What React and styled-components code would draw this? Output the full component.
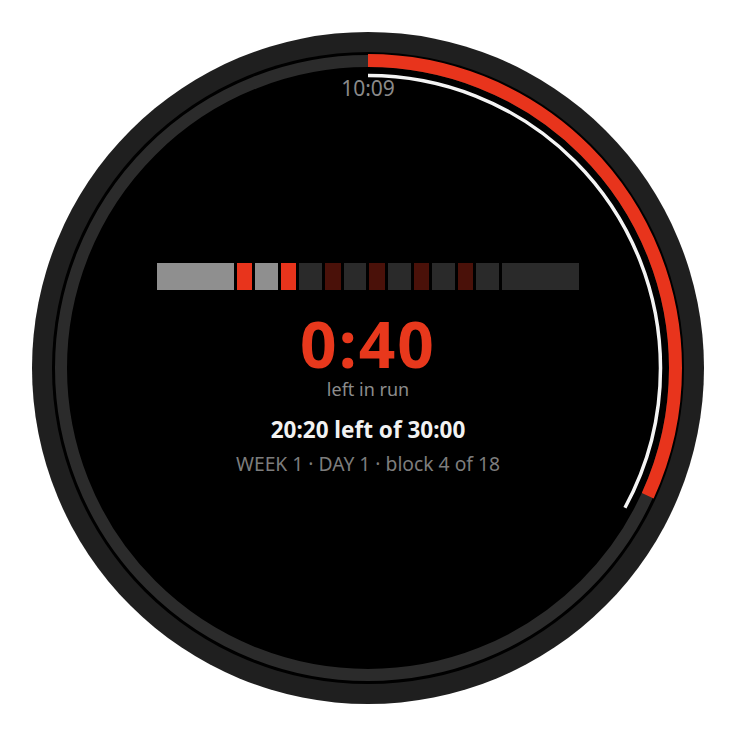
import React from "react";
import styled, { createGlobalStyle } from "styled-components";

const Global = createGlobalStyle`
  html, body { margin: 0; padding: 0; background: #ffffff; }
  body { font-family: "Noto Sans", "Open Sans", sans-serif; }
`;

const Page = styled.div`
  width: 736px;
  height: 736px;
  display: flex;
  align-items: center;
  justify-content: center;
`;

const Bezel = styled.div`
  width: 672px;
  height: 672px;
  box-sizing: border-box;
  border-radius: 50%;
  background: #1f1f1f;
  padding: 20px;
`;

const Face = styled.div`
  position: relative;
  width: 100%;
  height: 100%;
  border-radius: 50%;
  background: #000;
  overflow: hidden;
`;

const Rings = styled.svg`
  position: absolute;
  inset: 0;
  width: 100%;
  height: 100%;
`;

const Screen = styled.div`
  position: relative;
  height: 100%;
  display: grid;
  grid-template-rows: 1fr auto 1fr;
  justify-items: center;
`;

const Clock = styled.div`
  align-self: start;
  padding-top: 26px;
  font-size: 21px;
  line-height: 1;
  color: #8a8a8a;
`;

const Center = styled.div`
  display: flex;
  flex-direction: column;
  align-items: center;
`;

const Bar = styled.div`
  width: 422px;
  height: 27px;
  display: flex;
  gap: 3px;
  margin-bottom: 22px;
`;

const segColors = {
  doneWalk: "#8f8f8f",
  run: "#e8341c",
  walk: "#2a2a2a",
  futureRun: "#4a1109",
};

const Seg = styled.div`
  flex: ${(p) => p.$w} 1 0;
  background: ${(p) => segColors[p.$kind]};
`;

const Big = styled.div`
  font-size: 64px;
  font-weight: 700;
  line-height: 1;
  color: #e8381c;
  letter-spacing: 2px;
`;

const Caption = styled.div`
  margin-top: 4px;
  font-size: 18px;
  line-height: 1;
  color: #8c8c8c;
`;

const Total = styled.div`
  margin-top: 21px;
  font-size: 22.5px;
  font-weight: 700;
  line-height: 1;
  color: #f2f2f2;
`;

const Plan = styled.div`
  margin-top: 12px;
  font-size: 19.3px;
  line-height: 1;
  color: #7d7d7d;
`;

const segments = [
  [5, "doneWalk"],
  [1, "run"],
  [1.5, "doneWalk"],
  [1, "run"],
  [1.5, "walk"],
  [1, "futureRun"],
  [1.5, "walk"],
  [1, "futureRun"],
  [1.5, "walk"],
  [1, "futureRun"],
  [1.5, "walk"],
  [1, "futureRun"],
  [1.5, "walk"],
  [5, "walk"],
];

function Arc({ r, width, color, degrees }) {
  const c = 2 * Math.PI * r;
  const len = (degrees / 360) * c;
  return (
    <circle
      cx="316"
      cy="316"
      r={r}
      fill="none"
      stroke={color}
      strokeWidth={width}
      strokeDasharray={`${len} ${c}`}
      transform="rotate(-90 316 316)"
    />
  );
}

export default function App() {
  return (
    <Page>
      <Global />
      <Bezel>
        <Face>
          <Rings viewBox="0 0 632 632">
            <circle cx="316" cy="316" r="307" fill="none" stroke="#2b2b2b" strokeWidth="12" />
            <Arc r={307.5} width={13} color="#e8341c" degrees={114.5} />
            <Arc r={292.5} width={3.5} color="#f4f4f4" degrees={118.5} />
          </Rings>
          <Screen>
            <Clock>10:09</Clock>
            <Center>
              <Bar>
                {segments.map(([w, kind], i) => (
                  <Seg key={i} $w={w} $kind={kind} />
                ))}
              </Bar>
              <Big>0:40</Big>
              <Caption>left in run</Caption>
              <Total>20:20 left of 30:00</Total>
              <Plan>WEEK 1 · DAY 1 · block 4 of 18</Plan>
            </Center>
            <div />
          </Screen>
        </Face>
      </Bezel>
    </Page>
  );
}
